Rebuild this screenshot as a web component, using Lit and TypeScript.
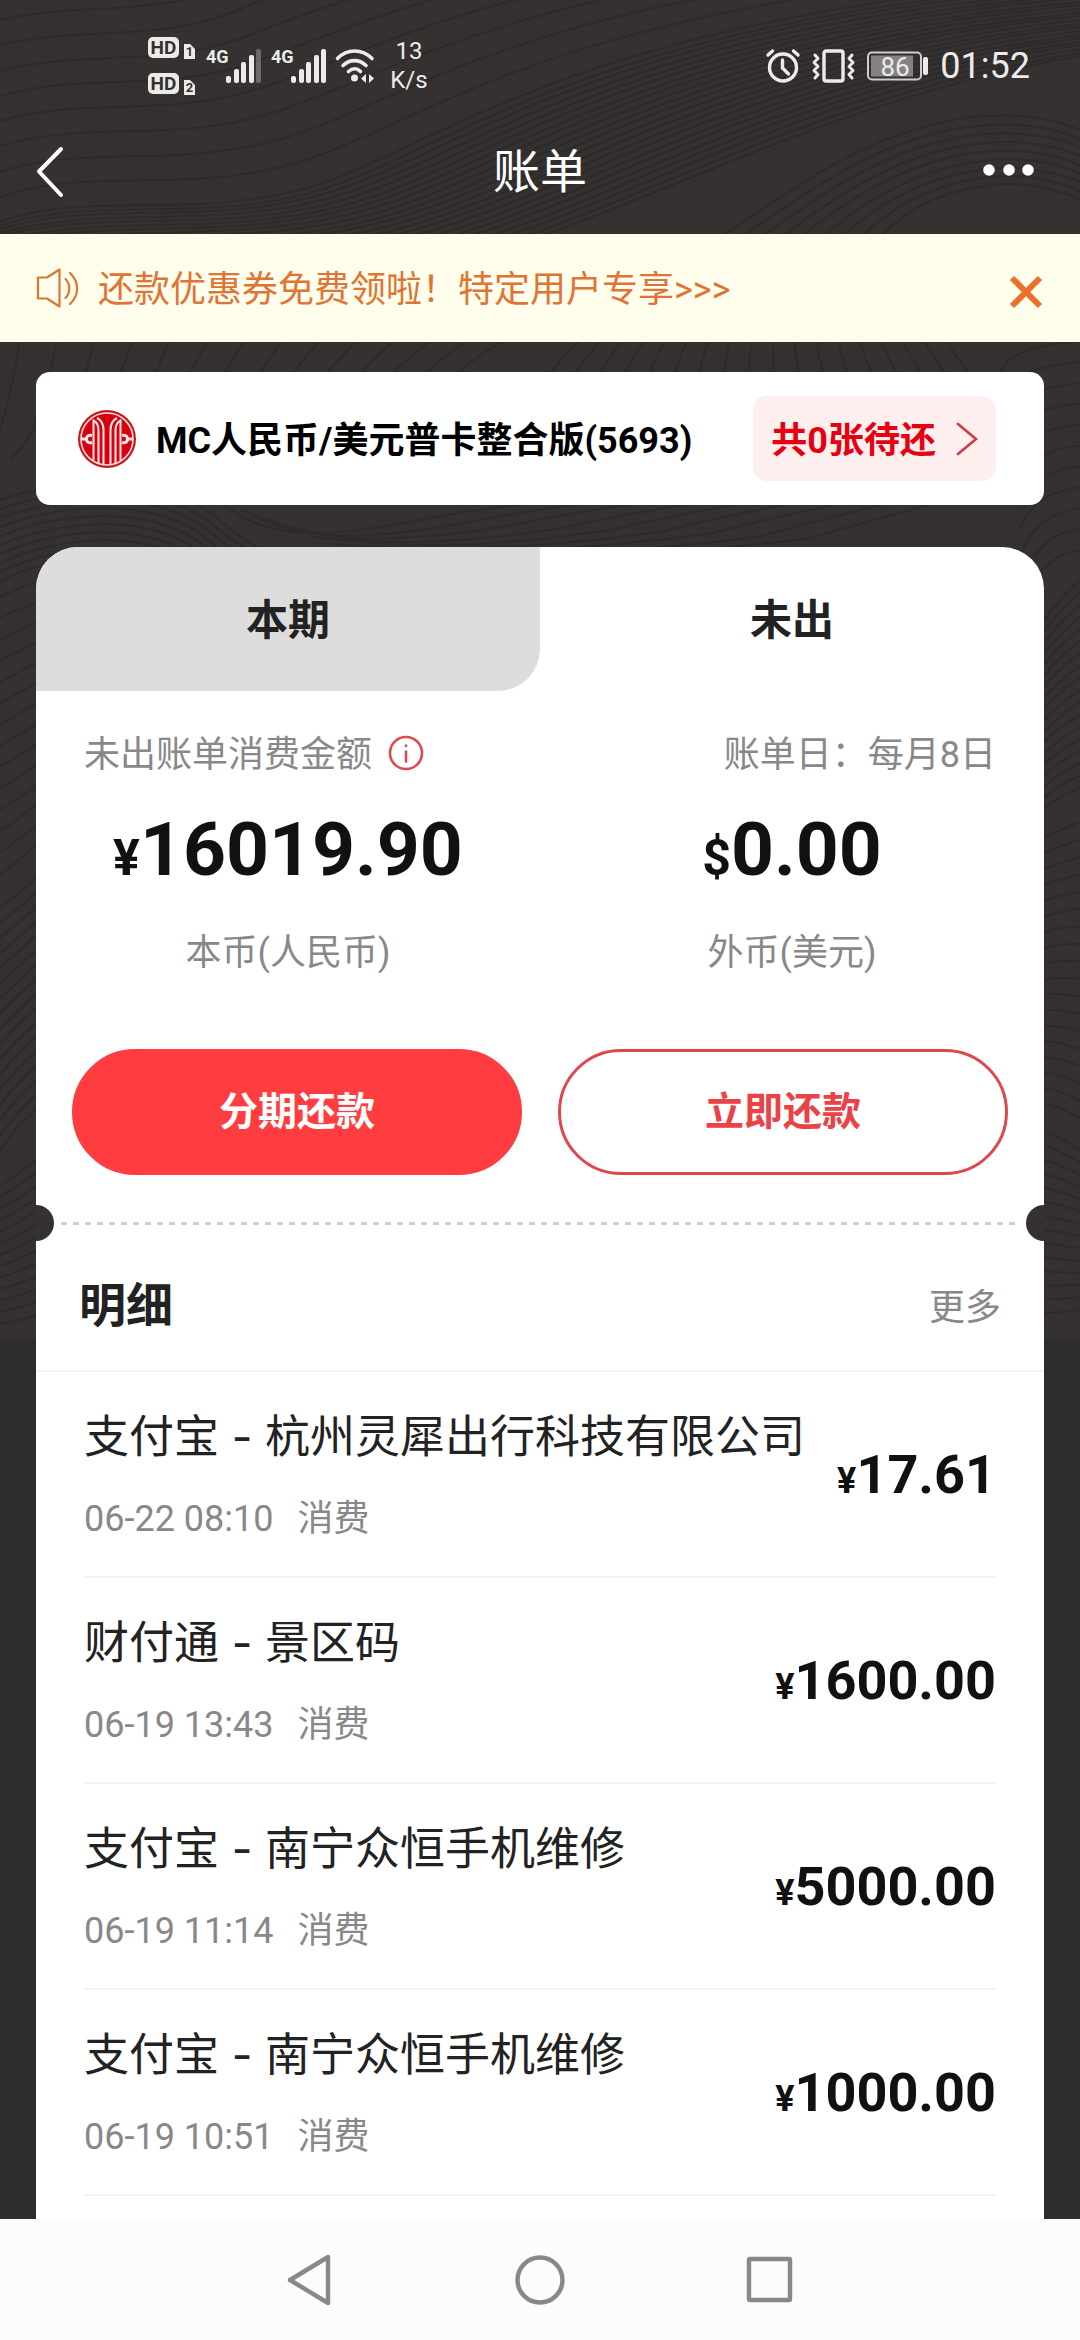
import { LitElement, html, css, svg } from "lit";
import { customElement, property, state } from "lit/decorators.js";

interface Entry {
  payee: string;
  time: string;
  kind: string;
  amount: string;
}

const ENTRIES: Entry[] = [
  { payee: "支付宝 - 杭州灵犀出行科技有限公司", time: "06-22 08:10", kind: "消费", amount: "17.61" },
  { payee: "财付通 - 景区码", time: "06-19 13:43", kind: "消费", amount: "1600.00" },
  { payee: "支付宝 - 南宁众恒手机维修", time: "06-19 11:14", kind: "消费", amount: "5000.00" },
  { payee: "支付宝 - 南宁众恒手机维修", time: "06-19 10:51", kind: "消费", amount: "1000.00" },
];

/* A contour family: two cubic outlines with the same number of points,
   and how many lines are blended between them. */
interface Family {
  from: number[];
  to: number[];
  count: number;
}

const CONTOURS: Family[] = [
  // header, wide waves
  { from: [0, 20, 90, 0, 160, 20, 240, -20, 330, -60, 420, -60, 560, -80], to: [0, 222, 90, 190, 180, 220, 300, 190, 430, 155, 560, 20, 1080, -20], count: 8 },
  // header, dense band
  { from: [0, 222, 90, 190, 180, 220, 300, 190, 430, 155, 560, 20, 1080, -20], to: [0, 300, 200, 290, 380, 300, 520, 250, 700, 190, 860, 100, 1080, 60], count: 22 },
  // header, hill on the right
  { from: [700, 250, 780, 200, 840, 150, 920, 128, 980, 110, 1040, 112, 1080, 130], to: [880, 260, 920, 205, 960, 195, 1000, 192, 1030, 190, 1060, 200, 1080, 208], count: 9 },
  // strip under the notice
  { from: [20, 330, 16, 370, 10, 400, 0, 430, -5, 440, -10, 450, -20, 460], to: [560, 330, 520, 350, 490, 370, 470, 390, 450, 410, 440, 430, 420, 450], count: 14 },
  { from: [590, 330, 560, 360, 550, 370, 540, 390, 530, 400, 520, 420, 510, 440], to: [960, 330, 980, 360, 1000, 380, 1010, 390, 1020, 400, 1030, 410, 1040, 420], count: 18 },
  { from: [1000, 372, 1010, 350, 1040, 345, 1090, 340, 1100, 340, 1110, 340, 1120, 340], to: [1030, 620, 1040, 590, 1060, 570, 1090, 570, 1100, 570, 1110, 570, 1120, 570], count: 11 },
  // strip between the two cards
  { from: [0, 500, 60, 480, 160, 470, 220, 520, 260, 560, 300, 560, 360, 560], to: [0, 590, 60, 560, 120, 560, 160, 570, 180, 580, 200, 590, 220, 600], count: 10 },
  { from: [220, 500, 260, 540, 320, 540, 420, 520, 520, 500, 600, 500, 700, 480], to: [420, 580, 560, 560, 700, 560, 860, 540, 920, 520, 1000, 500, 1080, 470], count: 9 },
  // left margin
  { from: [-10, 600, 0, 598, 10, 592, 20, 588, 30, 584, 40, 580, 50, 578], to: [-10, 900, 0, 896, 10, 888, 20, 880, 30, 872, 40, 862, 50, 856], count: 14 },
  { from: [-10, 915, 0, 908, 10, 900, 20, 892, 30, 884, 40, 874, 50, 866], to: [-10, 1180, 0, 1166, 10, 1150, 20, 1140, 30, 1128, 40, 1120, 50, 1112], count: 17 },
  { from: [-10, 1190, 0, 1186, 10, 1180, 20, 1172, 30, 1164, 40, 1158, 50, 1150], to: [-10, 1336, 0, 1335, 10, 1334, 20, 1332, 30, 1330, 40, 1328, 50, 1326], count: 13 },
  // right margin
  { from: [1030, 640, 1050, 610, 1060, 600, 1070, 590, 1080, 580, 1085, 575, 1090, 570], to: [1030, 830, 1050, 815, 1060, 808, 1070, 804, 1080, 800, 1085, 798, 1090, 796], count: 18 },
  { from: [1030, 845, 1050, 835, 1060, 830, 1070, 826, 1080, 822, 1085, 820, 1090, 818], to: [1030, 1120, 1050, 1118, 1060, 1124, 1070, 1130, 1080, 1136, 1085, 1138, 1090, 1140], count: 18 },
  { from: [1030, 1130, 1050, 1132, 1060, 1138, 1070, 1144, 1080, 1150, 1085, 1152, 1090, 1154], to: [1030, 1326, 1050, 1328, 1060, 1326, 1070, 1324, 1080, 1322, 1085, 1322, 1090, 1322], count: 14 },
];

function contourPath({ from, to, count }: Family): string {
  const parts: string[] = [];
  for (let i = 0; i < count; i++) {
    const t = i / count;
    const p = from.map((v, k) => Math.round(v + (to[k] - v) * t));
    parts.push(`M${p[0]} ${p[1]}C${p.slice(2, 8).join(" ")} ${p.slice(8, 14).join(" ")}`);
  }
  return parts.join("");
}

const CONTOUR_PATH = CONTOURS.map(contourPath).join("");

@customElement("money-amount")
class MoneyAmount extends LitElement {
  @property() sign = "¥";
  @property() value = "";

  static styles = css`
    :host {
      display: block;
      white-space: nowrap;
      font-weight: 700;
      color: #111;
    }
    .sign {
      font-size: var(--sign-size, 36px);
      line-height: 1;
    }
  `;

  render() {
    return html`<span class="sign">${this.sign}</span>${this.value}`;
  }
}

@customElement("status-bar")
class StatusBar extends LitElement {
  static styles = css`
    :host {
      display: flex;
      justify-content: space-between;
      align-items: center;
      height: 110px;
      padding: 22px 50px 0 148px;
      color: #ecebea;
    }
    .group {
      display: flex;
      align-items: center;
      gap: 12px;
    }
    svg {
      display: block;
      flex: none;
      overflow: visible;
    }
    .speed {
      width: 46px;
      font-size: 24px;
      line-height: 29px;
      text-align: center;
    }
    .clock {
      font-size: 36px;
      line-height: 44px;
    }
    text {
      font-family: Roboto, sans-serif;
    }
  `;

  private signal(lastDim: boolean) {
    const bars = [[0, 27], [8, 20], [15, 13], [23, 6], [30, 0]];
    return html`<svg width="53" height="34" viewBox="0 0 53 34" aria-hidden="true">
      <text x="-2" y="14" font-size="18" font-weight="700" fill="#ecebea">4G</text>
      ${bars.map(
        ([x, y], i) => svg`<rect x=${18 + x} y=${y} width="5" height=${34 - y} rx="2" fill="#ecebea"
          opacity=${i === 4 && lastDim ? 0.3 : 1}></rect>`
      )}
    </svg>`;
  }

  render() {
    return html`
      <div class="group">
        <svg width="48" height="58" viewBox="0 0 48 58" aria-hidden="true">
          ${[0, 36].map(
            (y, i) => svg`
              <rect x="0" y=${y} width="31" height="21" rx="5" fill="#ecebea"></rect>
              <text x="15.5" y=${y + 17} font-size="19" font-weight="700" text-anchor="middle" fill="#353130">HD</text>
              <path d=${`M36 ${y + 7}h6l5 5v10h-11z`} fill="#ecebea"></path>
              <text x="41.5" y=${y + 19} font-size="13" font-weight="700" text-anchor="middle" fill="#353130">${i + 1}</text>`
          )}
        </svg>
        ${this.signal(true)} ${this.signal(false)}
        <svg width="36" height="34" viewBox="3 0 36 34" fill="none" stroke="#ecebea" stroke-linecap="round" aria-hidden="true">
          <path d="M2.500 9.500C12-.5 27-.5 37 9.500" stroke-width="3.600"></path>
          <path d="M8 16.500c7-6.500 16-6.500 23 0" stroke-width="3.600"></path>
          <path d="M13.500 22.500c4-3.500 8.500-3.500 12 0" stroke-width="3.600"></path>
          <circle cx="19.500" cy="29" r="3.500" fill="#ecebea" stroke="none"></circle>
          <path d="M31 25v9l-5-4.500zM34 25v9l5-4.500z" fill="#ecebea" stroke="none"></path>
        </svg>
        <div class="speed">13<br />K/s</div>
      </div>
      <div class="group">
        <svg width="34" height="34" viewBox="0 0 34 34" fill="none" stroke="#ecebea" stroke-width="3.400" stroke-linecap="round" aria-hidden="true">
          <circle cx="17" cy="18.500" r="13.500"></circle>
          <path d="M16.500 11v8l6 6"></path>
          <path d="M2 6l4.500-4M32 6l-4.500-4"></path>
        </svg>
        <svg width="42" height="34" viewBox="0 0 42 34" fill="none" stroke="#ecebea" stroke-width="3.400" stroke-linejoin="round" stroke-linecap="round" aria-hidden="true">
          <rect x="12" y="2" width="19" height="30" rx="2"></rect>
          <path d="M3 6l3 3.500-4 4 4 4-4 4 4 4-3 3.500M40 6l-3 3.500 4 4-4 4 4 4-4 4 3 3.500" stroke-width="3"></path>
        </svg>
        <svg width="62" height="30" viewBox="0 0 62 30" aria-hidden="true">
          <rect x="2" y="1.500" width="53" height="27" rx="4" fill="none" stroke="#cfcecd" stroke-width="2"></rect>
          <rect x="5" y="4.500" width="42" height="21" fill="#858382"></rect>
          <rect x="57" y="6" width="5" height="18" rx="2" fill="#ecebea"></rect>
          <text x="29" y="24.500" font-size="26" text-anchor="middle" fill="#ecebea">86</text>
        </svg>
        <div class="clock">01:52</div>
      </div>
    `;
  }
}

@customElement("app-root")
class AppRoot extends LitElement {
  @state() private noticeOpen = true;

  static styles = css`
    :host {
      display: block;
      font-family: Roboto, "Noto Sans CJK SC", sans-serif;
    }
    * {
      box-sizing: border-box;
    }
    button {
      margin: 0;
      padding: 0;
      border: 0;
      background: none;
      font: inherit;
      color: inherit;
      cursor: pointer;
    }
    svg {
      display: block;
      flex: none;
    }
    h1,
    h2,
    p,
    ul {
      margin: 0;
      padding: 0;
    }
    .page {
      position: relative;
      isolation: isolate;
      display: flex;
      flex-direction: column;
      min-height: 100vh;
      background: #2f2d2c;
    }
    .backdrop {
      position: absolute;
      top: 0;
      left: 0;
      z-index: -1;
      width: 100%;
      height: auto;
    }
    .titlebar {
      display: grid;
      grid-template-columns: 1fr auto 1fr;
      align-items: center;
      height: 124px;
      padding: 0 34px;
      color: #fff;
    }
    .titlebar h1 {
      font-size: 47px;
      font-weight: 400;
      line-height: 60px;
    }
    .titlebar button:last-child {
      justify-self: end;
    }
    .titlebar button:first-child {
      justify-self: start;
    }
    .notice {
      display: flex;
      align-items: center;
      gap: 18px;
      height: 108px;
      padding: 0 36px;
      background: #fffdec;
      color: #e07434;
      font-size: 36px;
      line-height: 48px;
    }
    .notice a {
      flex: 1;
      padding-top: 4px;
      color: inherit;
      text-decoration: none;
    }
    .notice button {
      padding-top: 6px;
    }
    .content {
      display: flex;
      flex: 1;
      flex-direction: column;
      gap: 42px;
      padding: 30px 36px 0;
    }
    .card {
      display: flex;
      align-items: center;
      gap: 20px;
      height: 133px;
      padding: 0 48px 0 42px;
      border-radius: 14px;
      background: #fff;
      color: #000;
      font-size: 36px;
      font-weight: 700;
      line-height: 48px;
    }
    .card-name {
      flex: 1;
      padding-top: 4px;
      white-space: nowrap;
    }
    .pending {
      display: flex;
      align-items: center;
      gap: 20px;
      height: 85px;
      padding: 0 18px;
      border-radius: 14px;
      background: #feefef;
      color: #e60012;
      white-space: nowrap;
    }
    .pending span {
      padding-top: 4px;
    }
    .bill {
      display: flex;
      flex: 1;
      flex-direction: column;
      overflow: hidden;
      border-radius: 42px 42px 0 0;
      background: #fff;
    }
    .tabs {
      display: grid;
      grid-template-columns: 1fr 1fr;
      height: 144px;
    }
    .tab {
      padding-top: 4px;
      color: #222;
      font-size: 42px;
      font-weight: 700;
      line-height: 56px;
    }
    .tab-off {
      border-radius: 0 0 42px 0;
      background: #ddd;
    }
    .facts {
      display: flex;
      justify-content: space-between;
      padding: 38px 48px 0;
      color: #888;
      font-size: 36px;
      line-height: 52px;
    }
    .fact {
      display: flex;
      align-items: center;
      gap: 16px;
    }
    .fact svg {
      margin-bottom: 4px;
    }
    .totals {
      display: grid;
      grid-template-columns: 1fr 1fr;
      padding-top: 20px;
      text-align: center;
    }
    .total {
      font-size: 75px;
      line-height: 96px;
      --sign-size: 50px;
    }
    .currency {
      padding-top: 30px;
      color: #888;
      font-size: 36px;
      line-height: 52px;
    }
    .actions {
      display: grid;
      grid-template-columns: 1fr 1fr;
      gap: 36px;
      padding: 70px 36px 30px;
    }
    .action {
      height: 126px;
      border: 3px solid #e0474c;
      border-radius: 63px;
      color: #ea4246;
      font-size: 39px;
      font-weight: 700;
      line-height: 52px;
    }
    .action-main {
      border-color: #ff3d40;
      background: #ff3d40;
      color: #fff;
    }
    .tear {
      display: flex;
      align-items: center;
      gap: 7px;
    }
    .notch {
      width: 18px;
      height: 36px;
      border-radius: 0 18px 18px 0;
      background: #353130;
    }
    .notch-end {
      border-radius: 18px 0 0 18px;
    }
    .dashes {
      flex: 1;
      height: 3px;
      background: repeating-linear-gradient(90deg, #ced1d4 0 6px, #fff 6px 12px);
    }
    .details-head {
      display: flex;
      align-items: center;
      justify-content: space-between;
      height: 131px;
      padding: 0 43px;
      border-bottom: 2px solid #f5f5f5;
    }
    .details-head h2 {
      color: #222;
      font-size: 47px;
      font-weight: 700;
      line-height: 60px;
    }
    .more {
      padding-top: 4px;
      color: #888;
      font-size: 36px;
      line-height: 52px;
    }
    .entries {
      padding: 0 48px;
      list-style: none;
    }
    .entry {
      display: flex;
      align-items: center;
      justify-content: space-between;
      padding: 35px 0 33px;
      border-bottom: 2px solid #f5f5f5;
    }
    .payee {
      color: #222;
      font-family: Inter, "Noto Sans CJK SC", sans-serif;
      font-size: 45px;
      line-height: 60px;
      white-space: nowrap;
    }
    .meta {
      display: flex;
      gap: 24px;
      padding-top: 28px;
      color: #888;
      font-size: 36px;
      line-height: 48px;
    }
    .sum {
      font-size: 54px;
      line-height: 60px;
      --sign-size: 36px;
    }
    .navbar {
      display: flex;
      align-items: center;
      justify-content: center;
      gap: 180px;
      height: 121px;
      background: #fcfcfc;
    }
  `;

  render() {
    return html`
      <div class="page">
        <svg class="backdrop" viewBox="0 0 1080 1339" aria-hidden="true">
          <rect width="1080" height="1339" fill="#353130"></rect>
          <path d=${CONTOUR_PATH} fill="none" stroke="#2d2b2a" stroke-width="2"></path>
        </svg>

        <status-bar></status-bar>

        <header class="titlebar">
          <button aria-label="返回">
            <svg width="32" height="52" viewBox="0 0 32 52" fill="none" stroke="#fff" stroke-width="4" stroke-linecap="round" stroke-linejoin="round">
              <path d="M27 3L5 25.500 27 49"></path>
            </svg>
          </button>
          <h1>账单</h1>
          <button aria-label="菜单">
            <svg width="64" height="16" viewBox="0 0 64 16" fill="#fff">
              <circle cx="7" cy="6" r="5.800"></circle>
              <circle cx="27" cy="6" r="5.800"></circle>
              <circle cx="46" cy="6" r="5.800"></circle>
            </svg>
          </button>
        </header>

        ${this.noticeOpen
          ? html`<div class="notice">
              <svg width="44" height="40" viewBox="0 0 44 40" fill="none" stroke="#e07434" stroke-width="2.200" stroke-linecap="round" stroke-linejoin="round" aria-hidden="true">
                <path d="M2 9.500h9L23.500 1.500v37L11 30.500H2z"></path>
                <path d="M29.500 11c5 5 5 14 0 19M34 5c9.500 9 9.500 22 0 31"></path>
              </svg>
              <a href="#coupon">还款优惠券免费领啦！特定用户专享&gt;&gt;&gt;</a>
              <button aria-label="关闭" @click=${() => (this.noticeOpen = false)}>
                <svg width="36" height="36" viewBox="0 0 36 36" stroke="#ec6f2c" stroke-width="6">
                  <path d="M4 5l28 28M32 5L4 33"></path>
                </svg>
              </button>
            </div>`
          : null}

        <main class="content">
          <section class="card">
            <svg width="58" height="58" viewBox="0 0 58 58" aria-hidden="true">
              <circle cx="29" cy="29" r="29" fill="#c8161d"></circle>
              <circle cx="29" cy="29" r="26" fill="#d7000f" stroke="#f9dcdc" stroke-width="1.600"></circle>
              <g fill="none" stroke="#fbe9e9" stroke-width="2">
                <path d="M15.500 50.500V10.500c4 2 5 5 5 9.500V53"></path>
                <path d="M42.500 50.500V10.500c-4 2-5 5-5 9.500V53"></path>
                <path d="M19 8c5 2.500 6.500 6 6.500 12v34.500"></path>
                <path d="M39 8c-5 2.500-6.500 6-6.500 12v34.500"></path>
              </g>
              <g fill="none" stroke="#fbe9e9" stroke-width="3">
                <path d="M14 25.500c-3-1-5.500.5-5.500 3.500s2.500 4.500 5.500 3.500M3 29h5"></path>
                <path d="M44 25.500c3-1 5.500.5 5.500 3.500s-2.500 4.500-5.500 3.500M55 29h-5"></path>
              </g>
            </svg>
            <span class="card-name">MC人民币/美元普卡整合版(5693)</span>
            <button class="pending">
              <span>共0张待还</span>
              <svg width="22" height="34" viewBox="0 0 22 34" fill="none" stroke="#cf3a48" stroke-width="2.600" stroke-linecap="round" aria-hidden="true">
                <path d="M2 2l18 15L2 32"></path>
              </svg>
            </button>
          </section>

          <section class="bill">
            <div class="tabs" role="tablist">
              <button class="tab tab-off" role="tab" aria-selected="false">本期</button>
              <button class="tab" role="tab" aria-selected="true">未出</button>
            </div>

            <div class="facts">
              <div class="fact">
                未出账单消费金额
                <svg width="36" height="36" viewBox="0 0 36 36" fill="none" stroke="#dd4a50" stroke-width="2.600" stroke-linecap="round" aria-hidden="true">
                  <circle cx="18" cy="18" r="16"></circle>
                  <path d="M18 16.500v10M18 10.500v.5"></path>
                </svg>
              </div>
              <div class="fact">账单日：每月8日</div>
            </div>

            <div class="totals">
              <div>
                <money-amount class="total" sign="¥" value="16019.90"></money-amount>
                <p class="currency">本币(人民币)</p>
              </div>
              <div>
                <money-amount class="total" sign="$" value="0.00"></money-amount>
                <p class="currency">外币(美元)</p>
              </div>
            </div>

            <div class="actions">
              <button class="action action-main">分期还款</button>
              <button class="action">立即还款</button>
            </div>

            <div class="tear">
              <div class="notch"></div>
              <div class="dashes"></div>
              <div class="notch notch-end"></div>
            </div>

            <div class="details-head">
              <h2>明细</h2>
              <button class="more">更多</button>
            </div>

            <ul class="entries">
              ${ENTRIES.map(
                (e) => html`<li class="entry">
                  <div>
                    <div class="payee">${e.payee}</div>
                    <div class="meta"><span>${e.time}</span><span>${e.kind}</span></div>
                  </div>
                  <money-amount class="sum" value=${e.amount}></money-amount>
                </li>`
              )}
            </ul>
          </section>
        </main>

        <nav class="navbar">
          <button aria-label="后退">
            <svg width="50" height="54" viewBox="0 0 50 54" fill="none" stroke="#888" stroke-width="4.400" stroke-linejoin="round">
              <path d="M43 4v46L5 27z"></path>
            </svg>
          </button>
          <button aria-label="主页">
            <svg width="50" height="50" viewBox="0 0 50 50" fill="none" stroke="#888" stroke-width="4.400">
              <circle cx="25" cy="25" r="22.500"></circle>
            </svg>
          </button>
          <button aria-label="最近任务">
            <svg width="50" height="50" viewBox="0 0 50 50" fill="none" stroke="#888" stroke-width="4.400" stroke-linejoin="round">
              <rect x="4" y="4" width="41" height="41" rx="1"></rect>
            </svg>
          </button>
        </nav>
      </div>
    `;
  }
}
